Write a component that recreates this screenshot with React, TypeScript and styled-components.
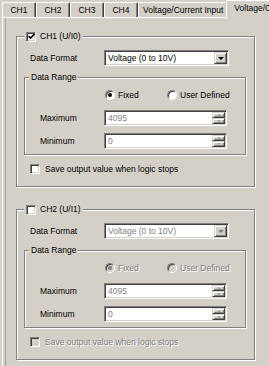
import React from "react";
import styled, { createGlobalStyle } from "styled-components";

const GlobalStyle = createGlobalStyle`
  html, body {
    margin: 0;
    padding: 0;
    background: #d4d0c8;
  }
`;

const Page = styled.div`
  width: 269px;
  height: 366px;
  overflow: hidden;
  background: #d4d0c8;
  font-family: "Liberation Sans", Arial, sans-serif;
  font-size: 8.5px;
  color: #000;
`;

const TabStrip = styled.div`
  display: flex;
  align-items: flex-end;
  height: 17px;
  padding-left: 2px;
  position: relative;
  z-index: 1;
`;

const Tab = styled.div<{ $active?: boolean }>`
  flex-shrink: 0;
  box-sizing: border-box;
  height: ${(p) => (p.$active ? "19px" : "15px")};
  margin: ${(p) => (p.$active ? "0 -2px -2px -2px" : "0")};
  padding: ${(p) => (p.$active ? "0 7px" : "0 4px")};
  min-width: 34px;
  text-align: center;
  line-height: ${(p) => (p.$active ? "14px" : "14px")};
  white-space: nowrap;
  background: #d4d0c8;
  border-top: 1px solid #fff;
  border-left: 1px solid #fff;
  border-right: 1px solid #404040;
  box-shadow: inset -1px 0 0 #808080;
  border-radius: 2px 2px 0 0;
`;

const Panel = styled.div`
  height: 349px;
  margin-left: 2px;
  border-top: 1px solid #fff;
  border-left: 1px solid #fff;
`;

const Inner = styled.div`
  height: 100%;
  margin-left: 2px;
  border-left: 1px solid #a8a49c;
  padding: 13px 0 0 10px;
`;

const Group = styled.fieldset<{ $w: number }>`
  margin: 0;
  padding: 0;
  min-inline-size: 0;
  box-sizing: border-box;
  width: ${(p) => p.$w}px;
  border: 1px solid #808080;
  box-shadow: inset 1px 1px 0 #fff, 1px 1px 0 #fff;
`;

const OuterGroup = styled(Group)`
  & + & {
    margin-top: 17px;
  }
`;

const RangeGroup = styled(Group)`
  margin-top: 6px;
`;

const Legend = styled.legend<{ $ml: number; $off?: boolean }>`
  display: flex;
  align-items: center;
  gap: 4px;
  height: 11px;
  line-height: 11px;
  margin-left: ${(p) => p.$ml}px;
  padding: 0 2px;
  background: #d4d0c8;
  color: ${(p) => (p.$off ? "#808080" : "#000")};
`;

const Body = styled.div`
  padding: 8px 7px 12px 7px;
`;

const FormatRow = styled.div`
  display: flex;
  align-items: center;
  padding-left: 6px;
  height: 16px;
`;

const Label = styled.span<{ $w: number }>`
  width: ${(p) => p.$w}px;
  flex-shrink: 0;
`;

const Sunken = styled.div<{ $w: number }>`
  box-sizing: border-box;
  width: ${(p) => p.$w}px;
  height: 16px;
  display: flex;
  align-items: center;
  background: #fff;
  border: 1px solid;
  border-color: #808080 #fff #fff #808080;
  box-shadow: inset 1px 1px 0 #404040, inset -1px -1px 0 #d4d0c8;
  padding: 1px;
`;

const FieldText = styled.span<{ $off?: boolean }>`
  flex: 1;
  padding-left: 2px;
  white-space: nowrap;
  overflow: hidden;
  line-height: 12px;
  color: ${(p) => (p.$off ? "#808080" : "#000")};
`;

const DropButton = styled.div`
  box-sizing: border-box;
  width: 13px;
  height: 12px;
  display: flex;
  align-items: center;
  justify-content: center;
  background: #d4d0c8;
  border: 1px solid;
  border-color: #d4d0c8 #404040 #404040 #d4d0c8;
  box-shadow: inset 1px 1px 0 #fff, inset -1px -1px 0 #808080;
`;

const Arrow = styled.div<{ $color: string; $up?: boolean; $size: number }>`
  width: 0;
  height: 0;
  border-left: ${(p) => p.$size}px solid transparent;
  border-right: ${(p) => p.$size}px solid transparent;
  ${(p) => (p.$up ? "border-bottom" : "border-top")}: ${(p) =>
      p.$size}px solid ${(p) => p.$color};
`;

const SpinCol = styled.div`
  display: flex;
  flex-direction: column;
  width: 13px;
  height: 12px;
`;

const SpinHalf = styled(DropButton)`
  height: 6px;
`;

const RangeBody = styled.div`
  padding: 6px 0 5px 0;
`;

const RadioRow = styled.div`
  display: flex;
  align-items: center;
  height: 11px;
  padding-left: 80px;
`;

const RadioItem = styled.div<{ $w?: number; $off?: boolean }>`
  display: flex;
  align-items: center;
  gap: 3px;
  width: ${(p) => (p.$w ? `${p.$w}px` : "auto")};
  color: ${(p) => (p.$off ? "#808080" : "#000")};
  text-shadow: ${(p) => (p.$off ? "1px 1px 0 #fff" : "none")};
`;

const Radio = styled.div<{ $on?: boolean; $off?: boolean }>`
  box-sizing: border-box;
  width: 10px;
  height: 10px;
  border-radius: 50%;
  border: 1px solid;
  border-color: #808080 #fff #fff #808080;
  box-shadow: inset 1px 1px 0 #404040;
  background: ${(p) => (p.$off ? "#d4d0c8" : "#fff")};
  display: flex;
  align-items: center;
  justify-content: center;
  &::after {
    content: "";
    display: ${(p) => (p.$on ? "block" : "none")};
    width: 4px;
    height: 4px;
    border-radius: 50%;
    background: ${(p) => (p.$off ? "#808080" : "#000")};
  }
`;

const FieldRow = styled.div<{ $mt: number }>`
  display: flex;
  align-items: center;
  padding-left: 15px;
  margin-top: ${(p) => p.$mt}px;
`;

const SaveRow = styled.div<{ $off?: boolean }>`
  display: flex;
  align-items: center;
  gap: 5px;
  margin-top: 8px;
  padding-left: 6px;
  height: 11px;
  color: ${(p) => (p.$off ? "#808080" : "#000")};
  text-shadow: ${(p) => (p.$off ? "1px 1px 0 #fff" : "none")};
`;

const Box = styled.div<{ $off?: boolean }>`
  box-sizing: border-box;
  width: 10px;
  height: 10px;
  flex-shrink: 0;
  border: 1px solid;
  border-color: #808080 #fff #fff #808080;
  box-shadow: inset 1px 1px 0 #404040, inset -1px -1px 0 #d4d0c8;
  background: ${(p) => (p.$off ? "#d4d0c8" : "#fff")};
  display: flex;
  align-items: center;
  justify-content: center;
`;

const Check = ({ on, off }: { on?: boolean; off?: boolean }) => (
  <Box $off={off}>
    {on && (
      <svg width="7" height="7" viewBox="0 0 7 7">
        <path d="M0.5 3 L2.5 5 L6.5 1" fill="none" stroke="#000" strokeWidth="1.6" />
      </svg>
    )}
  </Box>
);

const Spin = ({ value }: { value: string }) => (
  <Sunken $w={123}>
    <FieldText $off>{value}</FieldText>
    <SpinCol>
      <SpinHalf>
        <Arrow $up $size={2} $color="#a0a0a0" />
      </SpinHalf>
      <SpinHalf>
        <Arrow $size={2} $color="#a0a0a0" />
      </SpinHalf>
    </SpinCol>
  </Sunken>
);

const Channel = ({ title, on, off }: { title: string; on: boolean; off: boolean }) => (
  <OuterGroup $w={239}>
    <Legend $ml={7}>
      <Check on={on} />
      <span>{title}</span>
    </Legend>
    <Body>
      <FormatRow>
        <Label $w={74}>Data Format</Label>
        <Sunken $w={125}>
          <FieldText $off={off}>Voltage (0 to 10V)</FieldText>
          <DropButton>
            <Arrow $size={3.5} $color={off ? "#808080" : "#000"} />
          </DropButton>
        </Sunken>
      </FormatRow>
      <RangeGroup $w={222}>
        <Legend $ml={4}>Data Range</Legend>
        <RangeBody>
          <RadioRow>
            <RadioItem $w={62} $off={off}>
              <Radio $on $off={off} />
              <span>Fixed</span>
            </RadioItem>
            <RadioItem $off={off}>
              <Radio $off={off} />
              <span>User Defined</span>
            </RadioItem>
          </RadioRow>
          <FieldRow $mt={10}>
            <Label $w={64}>Maximum</Label>
            <Spin value="4095" />
          </FieldRow>
          <FieldRow $mt={7}>
            <Label $w={64}>Minimum</Label>
            <Spin value="0" />
          </FieldRow>
        </RangeBody>
      </RangeGroup>
      <SaveRow $off={off}>
        <Check off={off} />
        <span>Save output value when logic stops</span>
      </SaveRow>
    </Body>
  </OuterGroup>
);

export default function App() {
  return (
    <Page>
      <GlobalStyle />
      <TabStrip>
        <Tab>CH1</Tab>
        <Tab>CH2</Tab>
        <Tab>CH3</Tab>
        <Tab>CH4</Tab>
        <Tab>Voltage/Current Input</Tab>
        <Tab $active>Voltage/Current Output</Tab>
      </TabStrip>
      <Panel>
        <Inner>
          <Channel title="CH1 (U/I0)" on off={false} />
          <Channel title="CH2 (U/I1)" on={false} off />
        </Inner>
      </Panel>
    </Page>
  );
}
